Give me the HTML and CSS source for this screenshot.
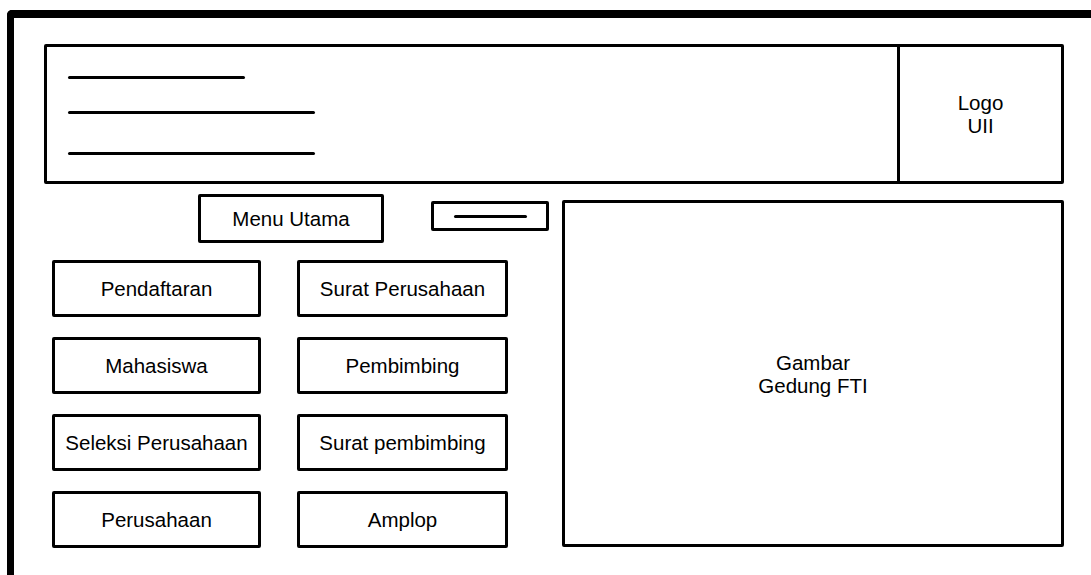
FILE: index.html
```html
<!DOCTYPE html>
<html>
<head>
    <title>Menu Utama</title>
    <meta name="viewport" content="width=device-width, initial-scale=1">
    <meta charset="UTF-8">
    <link rel="stylesheet" href="styles.css">
</head>
<body>
    <div class="frame">
        <div class="header">
            <div class="header-lines">
                <span class="line line-short"></span>
                <span class="line"></span>
                <span class="line line-low"></span>
            </div>
            <div class="logo">Logo<br>UII</div>
        </div>

        <div class="main">
            <div class="menu">
                <div class="menu-bar">
                    <div class="box menu-title">Menu Utama</div>
                    <div class="box search"><span class="search-line"></span></div>
                </div>
                <div class="menu-grid">
                    <div class="box">Pendaftaran</div>
                    <div class="box">Surat Perusahaan</div>
                    <div class="box">Mahasiswa</div>
                    <div class="box">Pembimbing</div>
                    <div class="box">Seleksi Perusahaan</div>
                    <div class="box">Surat pembimbing</div>
                    <div class="box">Perusahaan</div>
                    <div class="box">Amplop</div>
                </div>
            </div>
            <div class="box picture">Gambar<br>Gedung FTI</div>
        </div>
    </div>
</body>
</html>
```

FILE: styles.css
```css
html, body {
    margin: 0;
    overflow: hidden;
    background-color: #FFFFFF;
}
body {
    color: #000000;
    font-family: "Liberation Sans", Arial, sans-serif;
    font-size: 20.5px;
}
/* большая рамка страницы */
.frame {
    box-sizing: border-box;
    height: calc(100vh - 10px);
    margin: 10px 0 0 7px;
    padding: 26px 0 0 30px;
    border-top: 8px solid #000;
    border-left: 7px solid #000;
    border-top-left-radius: 5px;
}
.header {
    box-sizing: border-box;
    display: flex;
    width: 1020px;
    height: 140px;
    border: 3px solid #000;
    border-radius: 2px;
}
.header-lines {
    flex: 1;
    display: flex;
    flex-direction: column;
    gap: 32px;
    padding: 29px 0 0 21px;
}
.line {
    display: block;
    width: 247px;
    height: 3px;
    border-radius: 2px;
    background-color: #000;
}
.line-short {
    width: 177px;
}
.line-low {
    margin-top: 6px;
}
.logo {
    display: flex;
    align-items: center;
    justify-content: center;
    width: 161px;
    border-left: 3px solid #000;
    text-align: center;
    line-height: 23px;
}
.main {
    display: flex;
    align-items: flex-start;
    margin-top: 10px;
}
.box {
    box-sizing: border-box;
    display: flex;
    align-items: center;
    justify-content: center;
    border: 3px solid #000;
    border-radius: 2px;
    text-align: center;
    line-height: 23px;
}
.menu {
    width: 497px;
    margin-left: 8px;
}
.menu-bar {
    display: flex;
    align-items: flex-start;
    padding-left: 146px;
}
.menu-title {
    width: 186px;
    height: 49px;
}
.search {
    width: 118px;
    height: 30px;
    margin: 7px 0 0 47px;
}
.search-line {
    display: block;
    width: 73px;
    height: 3px;
    border-radius: 2px;
    background-color: #000;
}
.menu-grid {
    display: grid;
    grid-template-columns: 209px 211px;
    grid-auto-rows: 57px;
    column-gap: 36px;
    row-gap: 20px;
    margin-top: 17px;
}
.picture {
    width: 502px;
    height: 347px;
    margin: 6px 0 0 13px;
}
```
